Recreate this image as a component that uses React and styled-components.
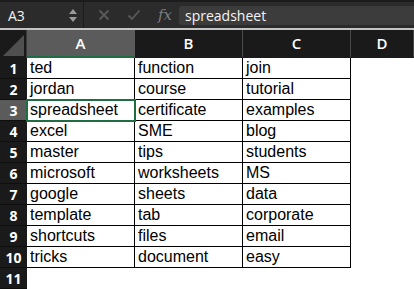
import React from 'react'
import styled, { createGlobalStyle } from 'styled-components'

const GlobalStyle = createGlobalStyle`
  html, body {
    margin: 0;
    padding: 0;
    background: #ffffff;
  }
  body {
    font-family: "Liberation Sans", Arial, sans-serif;
  }
`

const Wrap = styled.div`
  width: 414px;
  height: 289px;
  overflow: hidden;
  display: flex;
  flex-direction: column;
`

const FormulaBar = styled.div`
  height: 27px;
  border-top: 2px solid #1c1c1c;
  border-bottom: 2px solid #c4c4c4;
  background: #2b2b2b;
  display: flex;
  align-items: center;
`

const NameBox = styled.div`
  width: 84px;
  height: 100%;
  box-sizing: border-box;
  padding: 0 6px 0 8px;
  display: flex;
  align-items: center;
  justify-content: space-between;
  border-right: 1px solid #1c1c1c;
  color: #f2f2f2;
  font-family: "Open Sans", "Liberation Sans", sans-serif;
  font-size: 14px;
`

const Spinner = styled.div`
  display: flex;
  flex-direction: column;
  gap: 3px;
`

const Tri = styled.div`
  width: 0;
  height: 0;
  border-left: 4px solid transparent;
  border-right: 4px solid transparent;
  ${(p) => (p.down ? 'border-top: 5px solid #9a9a9a;' : 'border-bottom: 5px solid #9a9a9a;')}
`

const Tools = styled.div`
  display: flex;
  align-items: center;
  gap: 17px;
  padding: 0 7px 0 14px;
`

const Fx = styled.span`
  font-family: "DejaVu Serif", "Liberation Serif", serif;
  font-style: italic;
  color: #7d7d7d;
  font-size: 15px;
  margin-left: 0;
`

const FormulaInput = styled.div`
  flex: 1;
  height: 19px;
  background: #3c3c3c;
  border-radius: 3px 0 0 3px;
  color: #f4f4f4;
  font-family: "Open Sans", "Liberation Sans", sans-serif;
  font-size: 14px;
  line-height: 19px;
  padding-left: 6px;
`

const Grid = styled.div`
  display: grid;
  grid-template-columns: 27px 108px 108px 108px 1fr;
  grid-template-rows: 28px repeat(11, 21px);
`

const Corner = styled.div`
  background: #1a1a1a;
  border-right: 1px solid #3a3a3a;
  position: relative;
  svg {
    position: absolute;
    left: 3px;
    top: 5px;
  }
`

const ColHead = styled.div`
  background: ${(p) => (p.active ? '#5b5b5b' : '#1a1a1a')};
  border-right: 1px solid ${(p) => (p.active ? '#5b5b5b' : '#4a4a4a')};
  border-bottom: 2px solid ${(p) => (p.active ? '#1f6e43' : '#1a1a1a')};
  box-sizing: border-box;
  color: #ffffff;
  font-family: "Open Sans", "Liberation Sans", sans-serif;
  font-weight: 600;
  font-size: 15px;
  display: flex;
  align-items: center;
  justify-content: center;
`

const RowHead = styled.div`
  background: ${(p) => (p.active ? '#5b5b5b' : '#1a1a1a')};
  border-bottom: 1px solid #0e0e0e;
  box-sizing: border-box;
  color: #ffffff;
  font-family: "Open Sans", "Liberation Sans", sans-serif;
  font-weight: 700;
  font-size: 14px;
  display: flex;
  align-items: center;
  justify-content: center;
`

const Cell = styled.div`
  position: relative;
  box-sizing: border-box;
  background: #ffffff;
  color: #000000;
  font-size: 16px;
  padding-left: 3px;
  display: flex;
  align-items: center;
  white-space: nowrap;
  overflow: hidden;
  border-right: 1px solid ${(p) => (p.lined ? '#000' : 'transparent')};
  border-bottom: 1px solid ${(p) => (p.lined ? '#000' : 'transparent')};
  ${(p) =>
    p.selected &&
    `
    overflow: visible;
    outline: 2px solid #1f6e43;
    outline-offset: -1px;
    z-index: 2;
  `}
`

const data = [
  ['ted', 'function', 'join'],
  ['jordan', 'course', 'tutorial'],
  ['spreadsheet', 'certificate', 'examples'],
  ['excel', 'SME', 'blog'],
  ['master', 'tips', 'students'],
  ['microsoft', 'worksheets', 'MS'],
  ['google', 'sheets', 'data'],
  ['template', 'tab', 'corporate'],
  ['shortcuts', 'files', 'email'],
  ['tricks', 'document', 'easy'],
  ['', '', ''],
]

function Check() {
  return (
    <svg width="14" height="12" viewBox="0 0 14 12">
      <path d="M1.5 6.5 L5 10 L12.5 1.5" fill="none" stroke="#5a5a5a" strokeWidth="1.8" />
    </svg>
  )
}

function Cross() {
  return (
    <svg width="12" height="12" viewBox="0 0 12 12">
      <path d="M1.5 1.5 L10.5 10.5 M10.5 1.5 L1.5 10.5" fill="none" stroke="#5a5a5a" strokeWidth="1.8" />
    </svg>
  )
}

export default function App() {
  return (
    <Wrap>
      <GlobalStyle />
      <FormulaBar>
        <NameBox>
          <span>A3</span>
          <Spinner>
            <Tri />
            <Tri down />
          </Spinner>
        </NameBox>
        <Tools>
          <Cross />
          <Check />
          <Fx>fx</Fx>
        </Tools>
        <FormulaInput>spreadsheet</FormulaInput>
      </FormulaBar>
      <Grid>
        <Corner>
          <svg width="21" height="21" viewBox="0 0 21 21">
            <polygon points="21,0 21,21 0,21" fill="#4f4f4f" />
          </svg>
        </Corner>
        <ColHead active>A</ColHead>
        <ColHead>B</ColHead>
        <ColHead>C</ColHead>
        <ColHead>D</ColHead>
        {data.map((row, i) => (
          <React.Fragment key={i}>
            <RowHead active={i === 2}>{i + 1}</RowHead>
            {row.map((text, j) => (
              <Cell key={j} lined={i < 10} selected={i === 2 && j === 0}>
                {text}
              </Cell>
            ))}
            <Cell />
          </React.Fragment>
        ))}
      </Grid>
    </Wrap>
  )
}
